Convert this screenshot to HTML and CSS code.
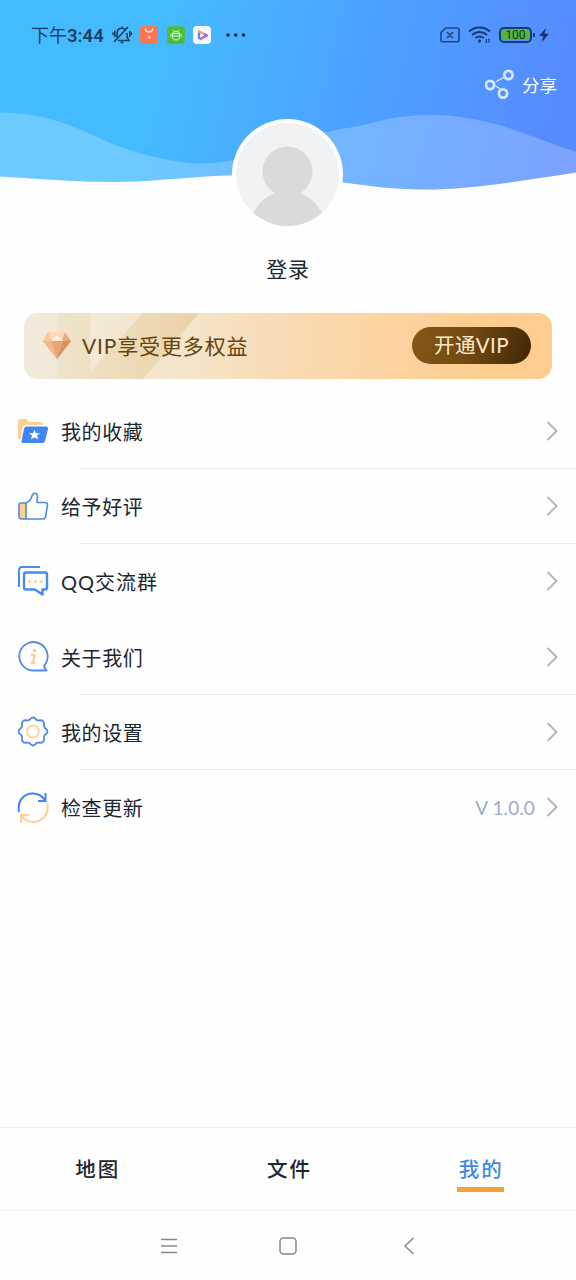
FILE: index.html
```html
<!DOCTYPE html>
<html lang="zh-CN">
<head>
<meta charset="utf-8">
<title>我的</title>
<link rel="stylesheet" href="styles.css">
</head>
<body>
<div class="screen">
  <header class="hero">
    <svg class="hero-bg" width="576" height="230" viewBox="0 0 576 230">
      <defs>
        <linearGradient id="sky" gradientUnits="userSpaceOnUse" x1="160" y1="60" x2="560" y2="150">
          <stop offset="0" stop-color="#45bbff"/><stop offset=".5" stop-color="#4da1ff"/><stop offset="1" stop-color="#568aff"/>
        </linearGradient>
      </defs>
      <path fill="url(#sky)" d="M0 0H576V172.500C520 181 470 189.500 425 189.500C390 189.500 365 185 340 182C300 176 250 173.500 205 176.500C170 179 140 182 115 182C75 182 35 178.500 0 176.500Z"/>
      <path fill="#fff" fill-opacity=".22" d="M0 112.500C50 113 80 129 112 144C145 156 175 163.500 205 163.500C240 163 270 148 325 132.500C340 129 355 127 370 123.500C420 108 475 115 520 132C540 139 560 147 576 151.500V172.500C520 181 470 189.500 425 189.500C390 189.500 365 185 340 182C300 176 250 173.500 205 176.500C170 179 140 182 115 182C75 182 35 178.500 0 176.500Z"/>
    </svg>
    <div class="hero-content">
      <div class="status">
        <span class="clock">下午<b>3:44</b></span>
        <svg class="bell" width="20" height="20" viewBox="0 0 20 20" fill="none" stroke="#173f61" stroke-width="1.6">
          <path d="M5 14V8C5.300 5 7.500 3.300 10 3.300Q12 3.300 13.200 4.500M15 8V12L17 15.500H6M8.500 17.500H11.500M10 3V1.500M2.800 5.500V12M17.800 6V12M1 7.500V10M19.300 7.500V10M2 17L16 2"/>
        </svg>
        <svg class="app" width="18" height="18" viewBox="0 0 18 18"><rect width="18" height="18" rx="4" fill="#fb7550"/><path d="M5 2.500C6 7 12 7 13 2.500" fill="none" stroke="#ffe9dd" stroke-width="1.300"/><circle cx="9.500" cy="11.500" r="1.200" fill="#ffe9dd"/></svg>
        <svg class="app" width="18" height="18" viewBox="0 0 18 18"><rect width="18" height="18" rx="4" fill="#4dbb3d"/><path d="M5.500 7.500V11C5.500 13 7 14 9 14S12.500 13 12.500 11V7.500ZM6 7.500C6 5 12 5 12 7.500M6 4L7 5.500M12 4L11 5.500M4 8V11M14 8V11M5.500 10H12.500" fill="none" stroke="#d8ffd0" stroke-width="1"/></svg>
        <svg class="app" width="18" height="18" viewBox="0 0 18 18"><rect width="18" height="18" rx="4" fill="#f8f7fc"/><g fill="none" stroke-width="2.300" stroke-linejoin="round"><path d="M6 13V5" stroke="#5a8ff0"/><path d="M5 5L14 9.500" stroke="#f2a15d"/><path d="M6.500 13.500L14 9.500L11 8" stroke="#a268d8"/></g></svg>
        <svg class="more" width="20" height="6" viewBox="0 0 20 6" fill="#0d2738"><circle cx="2" cy="3" r="1.800"/><circle cx="9.800" cy="3" r="1.800"/><circle cx="17.500" cy="3" r="1.800"/></svg>
        <span class="spacer"></span>
        <svg class="sim" width="20" height="16" viewBox="0 0 20 16" fill="none" stroke="#1b4680" stroke-width="1.600"><path d="M5.500 1H17.500Q19 1 19 2.500V13Q19 14.700 17.500 14.700H2.500Q1 14.700 1 13V5.500ZM7 5L13 11M13 5L7 11"/></svg>
        <svg class="wifi" width="23" height="20" viewBox="0 0 23 20" fill="none" stroke="#173c72" stroke-width="2"><path d="M1 6.500C7 1 16 1 22 6.500M4 10C8.500 6 14.500 6 19 10M7.300 13C10 11 13 11 15.700 13"/><circle cx="11.500" cy="16" r="1.200" fill="#173c72" stroke-width="1"/><path stroke-width="1" d="M18.500 14V18L17.300 16.800M20.800 18V14L22 15.200"/></svg>
        <span class="battery"><span class="charge">100</span></span>
        <svg class="bolt" width="10" height="14" viewBox="0 0 10 14"><path d="M7 0L0 8H4.200L3 14L10 5.800H5.500Z" fill="#183669"/></svg>
      </div>
      <div class="share">
        <svg width="32" height="32" viewBox="0 0 32 32" fill="none" stroke="#d6e8ff"><path stroke-width="1.300" d="M10.500 14L20.500 8.500M10.500 18L15.500 21"/><g stroke-width="2.800"><circle cx="23.500" cy="7" r="4.100"/><circle cx="5" cy="17" r="4.100"/><circle cx="18" cy="25.500" r="4.100"/></g></svg>
        <span>分享</span>
      </div>
      <svg class="avatar" width="112" height="112" viewBox="0 0 112 112">
        <defs><clipPath id="face"><circle cx="55.500" cy="55.500" r="51.500"/></clipPath></defs>
        <circle cx="55.500" cy="55.500" r="55.500" fill="#fff"/><circle cx="55.500" cy="55.500" r="51.500" fill="#f1f2f4"/>
        <g clip-path="url(#face)" fill="#dadadb"><circle cx="55.500" cy="52.500" r="25"/><path d="M17 104Q24 81 43 74Q44 72 42 70H69Q67 72 68 74Q87 81 94 104V112H17Z"/></g>
      </svg>
    </div>
  </header>
  <div class="login">登录</div>
  <section class="vip">
    <svg class="gem" width="28" height="28" viewBox="0 0 28 28">
      <path fill="#efa778" d="M5 0H22L28 9L14 27L0 9Z"/><path fill="#ffd6b7" d="M5 0H22L19 9L14 3L8 9Z"/><path fill="#fff0df" d="M14 3L20 9H8Z"/><path fill="#ffc69c" d="M5 0L8 9H0Z"/><path fill="#d99164" d="M20 9H28L14 27Z"/><path fill="#e8a478" d="M8 9H20L14 27Z"/><path fill="#f5b88d" d="M0 9H8L14 27Z"/>
    </svg>
    <span class="vip-text">VIP享受更多权益</span>
    <span class="vip-btn">开通VIP</span>
  </section>
  <nav class="menu">
    <div class="row line">
      <svg class="icon" width="32" height="32" viewBox="0 0 32 32"><path fill="#ffce91" d="M1 22V5Q1 3 3 3H9Q10 3 11 5L12 6H23Q26 6 26 9H9Q6 9 5.500 12L3.500 23Q1 24 1 22Z"/><path fill="#4285f4" d="M9.500 10.500H29Q31.500 10.500 31 13L28 25Q27.500 27 25.500 27H6Q4 27 4.500 25L7 13Q7.500 10.500 9.500 10.500Z"/><path fill="#fff" d="M17.500 13.500L19 17.200H23L20 19.500L21.200 23.500L17.500 21.200L14 23.500L15 19.500L12 17.200H16Z"/></svg>
      <span class="label">我的收藏</span><svg class="arrow" width="12" height="20" viewBox="0 0 12 20"><path d="M1.500 1L10.500 10L1.500 19"/></svg>
    </div>
    <div class="row line">
      <svg class="icon" width="32" height="32" viewBox="0 0 32 32"><path fill="#ffce91" d="M1.500 12H9V28H4Q1.500 28 1.500 25Z"/><path fill="none" stroke="#4b8ce0" stroke-width="1.600" stroke-linejoin="round" d="M9 12H4Q2 12 2 14V25Q2 28 5 28H26Q28 28 28.500 26L30.500 14Q30.500 11.500 28 11.500H20L20.500 5Q20.300 2.200 18 2.200Q16 2.200 15 5Q13.500 10 9 12V28"/></svg>
      <span class="label">给予好评</span><svg class="arrow" width="12" height="20" viewBox="0 0 12 20"><path d="M1.500 1L10.500 10L1.500 19"/></svg>
    </div>
    <div class="row">
      <svg class="icon" width="32" height="32" viewBox="0 0 32 32"><g fill="none" stroke="#4a8af0" stroke-width="2"><path d="M2 21V5Q2 1 5 1H23"/><path stroke-width="2.400" stroke-linejoin="round" d="M9 6.500H28Q30 6.500 30 8.500V21.500Q30 23.500 28 23.500H25.500V28.500L18 23.500H9Q7 23.500 7 21.500V8.500Q7 6.500 9 6.500Z"/></g><g fill="#ffce91"><circle cx="12.500" cy="15.500" r="1.600"/><circle cx="18.500" cy="15.500" r="1.600"/><circle cx="24.500" cy="15.500" r="1.600"/></g></svg>
      <span class="label qq">QQ交流群</span><svg class="arrow" width="12" height="20" viewBox="0 0 12 20"><path d="M1.500 1L10.500 10L1.500 19"/></svg>
    </div>
    <div class="row line">
      <svg class="icon" width="32" height="32" viewBox="0 0 32 32"><path fill="none" stroke="#5289e6" stroke-width="1.800" stroke-linejoin="round" d="M29.500 29.500H16A14.200 14.200 0 1 1 27 24.800Q27.500 27.500 29.500 29.500Z"/><circle cx="17.500" cy="9.500" r="1.800" fill="#ffcb94"/><path fill="none" stroke="#ffcb94" stroke-width="2.200" d="M14 14H17.500L16 22H18.500M14 22H17"/></svg>
      <span class="label">关于我们</span><svg class="arrow" width="12" height="20" viewBox="0 0 12 20"><path d="M1.500 1L10.500 10L1.500 19"/></svg>
    </div>
    <div class="row line">
      <svg class="icon" width="32" height="32" viewBox="0 0 32 32"><path fill="none" stroke="#5289e6" stroke-width="1.800" stroke-linejoin="round" d="M16 1.500Q17.500 1.500 19 3.300Q20 4.500 22 4.300Q25 4 26 5.200Q27.400 6.500 27 9.500Q27 11.500 28.500 12.500Q30.500 14 30.500 15.500T28.500 18.500Q27 19.500 27 21.500Q27.400 24.500 26 25.800Q25 27 22 26.700Q20 26.500 19 27.700Q17.500 29.500 16 29.500T13 27.700Q12 26.500 10 26.700Q7 27 6 25.800Q4.600 24.500 5 21.500Q5 19.500 3.500 18.500Q1.500 17 1.500 15.500T3.500 12.500Q5 11.500 5 9.500Q4.600 6.500 6 5.200Q7 4 10 4.300Q12 4.500 13 3.300Q14.500 1.500 16 1.500Z"/><circle cx="16" cy="15.500" r="6" fill="none" stroke="#ffd5a4" stroke-width="1.900"/></svg>
      <span class="label">我的设置</span><svg class="arrow" width="12" height="20" viewBox="0 0 12 20"><path d="M1.500 1L10.500 10L1.500 19"/></svg>
    </div>
    <div class="row">
      <svg class="icon" width="32" height="32" viewBox="0 0 32 32" fill="none" stroke-width="2"><path stroke="#4285f4" d="M2 20C0 9.500 6 1.500 16 1.500C21 1.500 25 3.500 28 8.500M28.500 1V9H21"/><path stroke="#ffce91" d="M30.500 11.500C32 21.500 26 30 16 30C11 30 7 27.500 4.500 23.500M4 30.500V23H12"/></svg>
      <span class="label">检查更新</span><span class="version">V 1.0.0</span><svg class="arrow" width="12" height="20" viewBox="0 0 12 20"><path d="M1.500 1L10.500 10L1.500 19"/></svg>
    </div>
  </nav>
  <footer class="tabs">
    <span class="tab">地图</span><span class="tab">文件</span><span class="tab active">我的</span>
  </footer>
  <div class="sysnav">
    <svg width="18" height="18" viewBox="0 0 18 18"><path d="M1 2.500H17M1 9H17M1 15.500H17"/></svg>
    <svg width="18" height="18" viewBox="0 0 18 18"><rect x="1" y="1" width="16" height="16" rx="3.500"/></svg>
    <svg width="18" height="18" viewBox="0 0 18 18"><path d="M15.500 1L7 9L15.500 17"/></svg>
  </div>
</div>
</body>
</html>
```
FILE: styles.css
```css
* { box-sizing: border-box; }
body { margin: 0; background: #fefefe; font-family: Lato, "Noto Sans CJK SC", sans-serif; color: #1c2730; }
svg { display: block; flex: none; }
span { white-space: nowrap; }
.screen { width: 576px; height: 1280px; display: flex; flex-direction: column; overflow: hidden; }

.hero { display: grid; height: 231px; flex: none; }
.hero-bg, .hero-content { grid-area: 1 / 1; }
.hero-content { display: flex; flex-direction: column; z-index: 1; }
.status { display: flex; align-items: center; height: 36px; margin: 17px 27px 0 31px; }
.clock { font: 400 18px/36px Roboto, "Noto Sans CJK SC", sans-serif; color: #173f61; width: 73px; margin-right: 8px; padding-top: 1px; }
.clock b { font-weight: 600; font-size: 18.5px; }
.bell { margin-right: 8px; }
.app { margin-right: 8.500px; }
.more { margin-left: 6px; }
.spacer { flex: 1; }
.wifi { margin-left: 8px; }
.battery { display: flex; width: 33px; height: 16px; margin-left: 8px; padding: 1px; border: 2px solid #183b78; border-radius: 5px; position: relative; }
.battery::after { content: ""; position: absolute; right: -5px; top: 4px; width: 2px; height: 4px; background: #183b78; }
.charge { flex: 1; border-radius: 2px; background: #54b43d; color: #103722; font: 400 12px/11px Roboto, sans-serif; text-align: center; }
.bolt { margin-left: 7px; }
.share { display: flex; align-items: center; align-self: flex-end; height: 32px; margin: 15px 19px 0 0; gap: 5px; color: #fff; font-size: 17.500px; }
.avatar { align-self: center; margin-top: 19px; }

.login { height: 76px; flex: none; line-height: 76px; text-align: center; font-size: 21px; letter-spacing: .8px; }

.vip { display: flex; align-items: center; flex: none; height: 66px; margin: 6px 24px 15px; padding: 0 21px 1px 19px; border-radius: 14px;
  background: linear-gradient(90deg, #f1ebdc 0, #f4e5ca 30%, #f9d9b1 52%, #ffcd8f 88%); overflow: hidden; position: relative; }
.vip::before { content: ""; position: absolute; inset: 0 auto 0 33px; width: 145px; background: linear-gradient(90deg, #e9dcbb66, #e8cd9dcc);
  clip-path: polygon(0 0, 33px 0, 33px 59px, 86px 0, 142px 0, 86px 66px, 0 66px); }
.gem { position: relative; }
.vip-text { position: relative; flex: 1; margin-left: 11px; padding-bottom: 2px; color: #65440f; font-size: 21px; letter-spacing: .85px; }
.vip-btn { position: relative; width: 119px; height: 37px; border-radius: 19px; color: #ffe9c9; background: linear-gradient(105deg, #855817, #744b12 45%, #412706); font-size: 20.500px; line-height: 37px; letter-spacing: .4px; text-align: center; }

.menu { flex: none; height: 733px; }
.row { display: flex; align-items: center; height: 75.200px; padding: 0 18px 1px 17px; position: relative; }
.line::after { content: ""; position: absolute; left: 80px; right: 0; bottom: 0; height: 1px; background: #ebebec; }
.icon { margin-top: 1px; }
.label { flex: 1; margin-left: 12px; padding-top: 1px; font-size: 20px; letter-spacing: .6px; }
.qq { letter-spacing: 1px; }
.version { margin-right: 11px; color: #9badc4; font-size: 19px; letter-spacing: .1px; }
.arrow { fill: none; stroke: #b7b7b7; stroke-width: 2; }

.tabs { display: grid; grid-template-columns: repeat(3, 1fr); justify-items: center; flex: none; height: 84px; padding: 22px 0 0 1px; border-top: 1px solid #efefef; border-bottom: 1px solid #f5f5f5; }
.tab { height: 43px; padding: 0 0 0 2px; font-size: 20.500px; font-weight: 500; line-height: 39px; letter-spacing: 2px; }
.active { height: 42px; color: #4189e6; border-bottom: 5px solid #f0a43a; }
.sysnav { display: flex; justify-content: center; align-items: center; flex: none; height: 69px; gap: 101px; }
.sysnav svg { fill: none; stroke: #888; stroke-width: 1.500; }
```
